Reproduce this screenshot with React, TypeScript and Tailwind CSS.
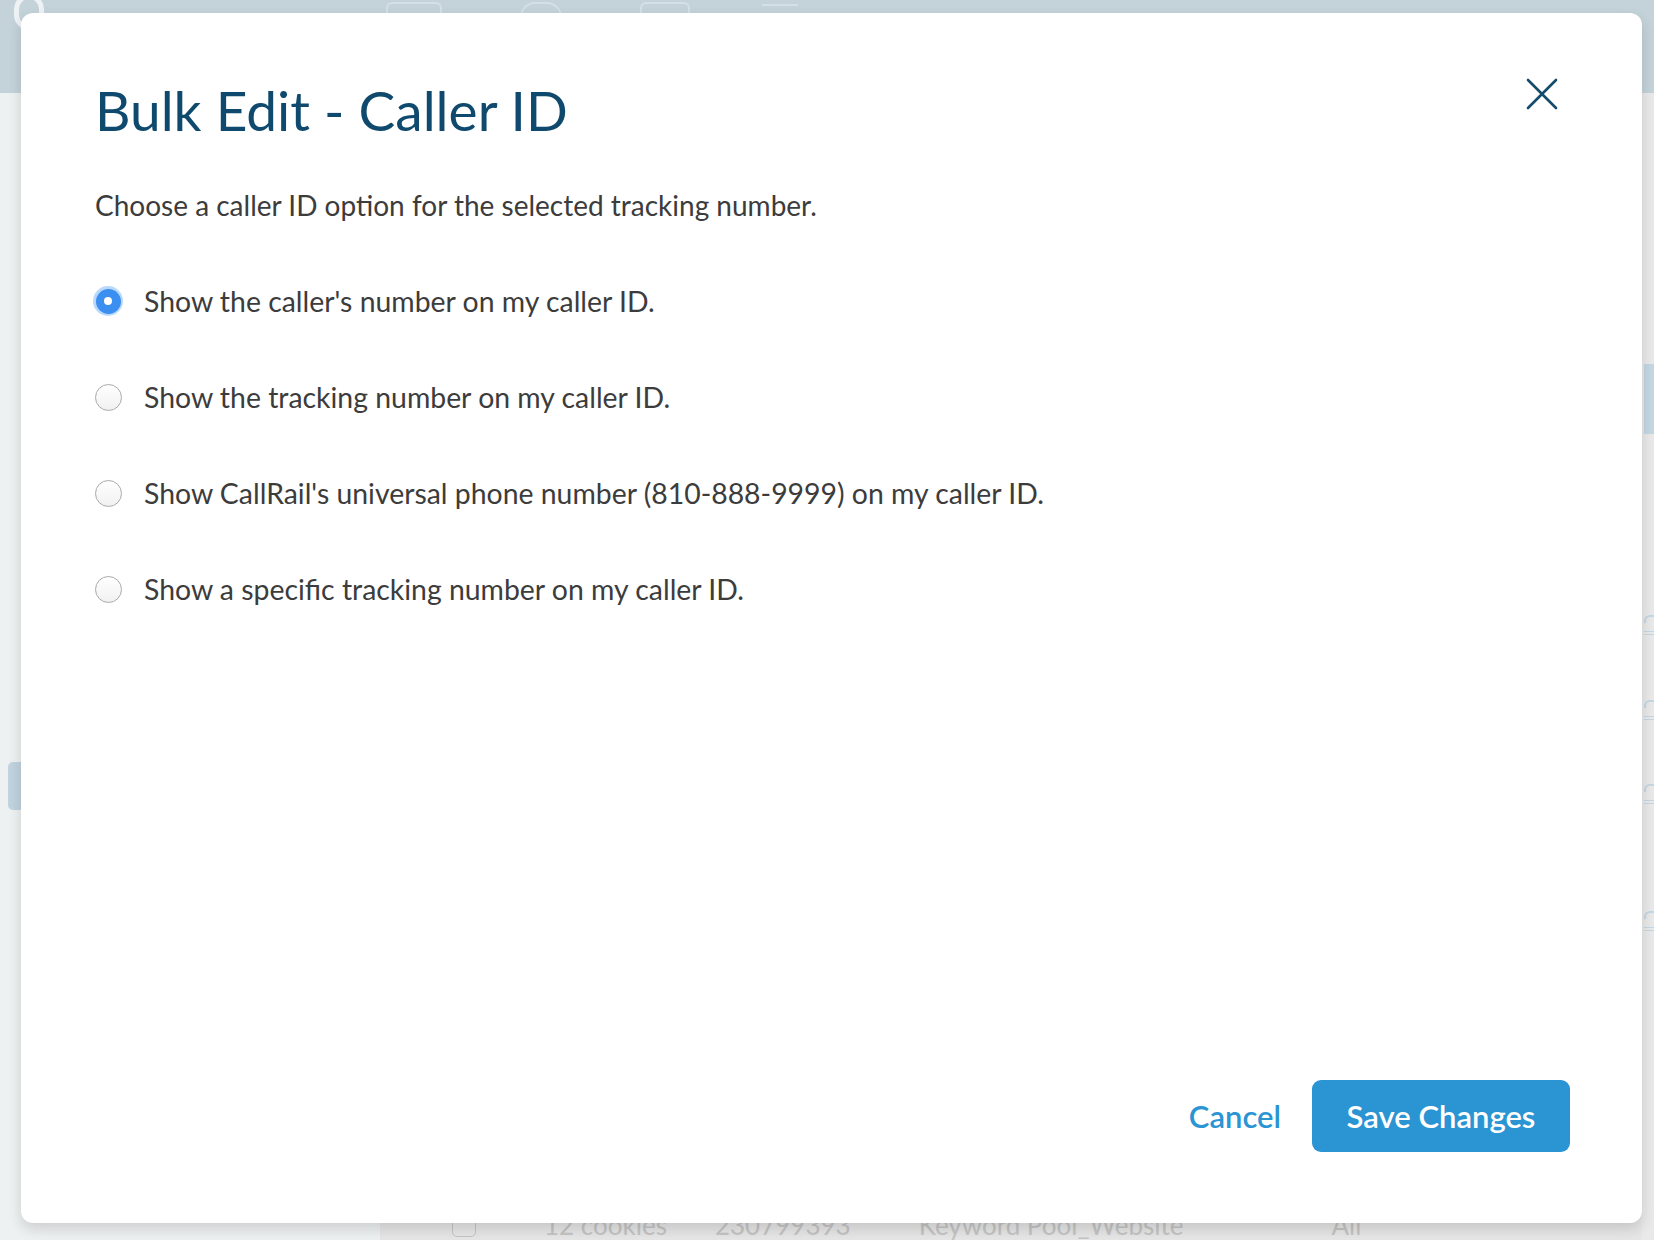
import { useState } from "react";

const OPTIONS = [
    "Show the caller's number on my caller ID.",
    "Show the tracking number on my caller ID.",
    "Show CallRail's universal phone number (810-888-9999) on my caller ID.",
    "Show a specific tracking number on my caller ID.",
];

const font = { fontFamily: '"Source Sans Pro", Lato, "Open Sans", sans-serif' };

function Radio({ checked }: { checked: boolean }) {
    if (checked) {
        return (
            <span className="w-[30px] h-[30px] rounded-full bg-[#b9d9fb] flex items-center justify-center flex-shrink-0">
                <span className="w-[25px] h-[25px] rounded-full bg-[#3b8ff0] flex items-center justify-center">
                    <span className="w-[8px] h-[8px] rounded-full bg-white"></span>
                </span>
            </span>
        );
    }
    return (
        <span className="w-[30px] h-[30px] flex items-center justify-center flex-shrink-0">
            <span className="w-[27px] h-[27px] rounded-full border border-[#a9a9a9] bg-gradient-to-b from-white to-[#f1f1f1]"></span>
        </span>
    );
}

function SideIcon({ className }: { className: string }) {
    return (
        <div className={className}>
            <div className="w-[10px] h-[8px] border-t-2 border-l-2 border-[#c4d7e3] rounded-tl-[6px]"></div>
            <div className="w-[10px] h-[4px] border-y border-[#c4d7e3] mt-[8px]"></div>
        </div>
    );
}

export default function App() {
    const [selected, setSelected] = useState(0);

    return (
        <div className="w-[1654px] h-[1240px] relative overflow-hidden bg-[#eef1f1]" style={font}>
            {/* Backdrop page (dimmed) */}
            <div className="h-[93px] bg-[#c4d2da] relative">
                <div className="absolute left-[14px] top-[-6px] w-[30px] h-[36px] rounded-full border-[5px] border-[#eef2f4]"></div>
                <div className="absolute left-[386px] top-[2px] w-[56px] h-[14px] rounded-t-[6px] border-2 border-b-0 border-[#d3e0e8]"></div>
                <div className="absolute left-[520px] top-[2px] w-[42px] h-[30px] rounded-full border-2 border-[#d3e0e8]"></div>
                <div className="absolute left-[640px] top-[2px] w-[50px] h-[14px] rounded-t-[6px] border-2 border-b-0 border-[#d3e0e8]"></div>
                <div className="absolute left-[762px] top-[4px] w-[36px] h-[12px] border-t-2 border-[#d3e0e8]"></div>
            </div>
            <div className="absolute left-[8px] top-[762px] w-[14px] h-[48px] rounded-l-[5px] bg-[#c0d3de]"></div>
            <div className="absolute right-0 top-[93px] w-[12px] h-[1147px] bg-[#e9e9e9] flex flex-col items-end">
                <div className="mt-[271px] w-[10px] h-[70px] bg-[#c4d7e3]"></div>
                <SideIcon className="mt-[181px] w-[10px]" />
                <SideIcon className="mt-[65px] w-[10px]" />
                <SideIcon className="mt-[64px] w-[10px]" />
                <SideIcon className="mt-[107px] w-[10px]" />
            </div>
            <div className="absolute left-[380px] top-[1210px] w-[1262px] h-[30px] bg-[#e6e6e6]">
                <div className="flex items-center gap-[48px] pl-[72px] text-[26px] leading-[30px] text-[#c4c4c4] whitespace-nowrap">
                    <span className="w-[24px] h-[24px] rounded-[5px] border border-[#c4c4c4]"></span>
                    <span className="ml-[20px]">12 cookies</span>
                    <span>230799393</span>
                    <span className="ml-[20px]">Keyword Pool_Website</span>
                    <span className="ml-[100px]">All</span>
                </div>
            </div>

            {/* Modal */}
            <div className="absolute left-[21px] top-[13px] w-[1621px] h-[1210px] bg-white rounded-[12px] shadow-[0_6px_14px_rgba(0,0,0,0.14)] flex flex-col pl-[74px] pr-[72px] pt-[64px] pb-[71px]">
                <div className="flex items-start justify-between">
                    <h1 className="text-[55px] leading-[66px] text-[#0f4a6e] font-normal">Bulk Edit - Caller ID</h1>
                    <button className="mt-[1px] mr-[12px] w-[32px] h-[32px] text-[#134b6d]" aria-label="Close">
                        <svg viewBox="0 0 32 32" width="32" height="32" fill="none" stroke="currentColor" strokeWidth="2.6" strokeLinecap="round">
                            <path d="M2 2 L30 30 M30 2 L2 30" />
                        </svg>
                    </button>
                </div>

                <p className="mt-[45px] text-[28px] leading-[34px] text-[#3c3c3c]">
                    Choose a caller ID option for the selected tracking number.
                </p>

                <div className="mt-[62px] flex flex-col gap-[62px]">
                    {OPTIONS.map((label, i) => (
                        <label key={i} className="flex items-center gap-[21px] h-[34px] -ml-[2px] cursor-pointer" onClick={() => setSelected(i)}>
                            <Radio checked={selected === i} />
                            <span className="text-[28.4px] leading-[34px] text-[#3c3c3c]">{label}</span>
                        </label>
                    ))}
                </div>

                <div className="flex-1"></div>

                <div className="flex items-center justify-end gap-[31px]">
                    <button className="text-[31px] font-semibold text-[#2b94d3]">Cancel</button>
                    <button className="w-[258px] h-[72px] rounded-[9px] bg-[#2b94d3] text-white text-[31px] font-semibold">
                        Save Changes
                    </button>
                </div>
            </div>
        </div>
    );
}
